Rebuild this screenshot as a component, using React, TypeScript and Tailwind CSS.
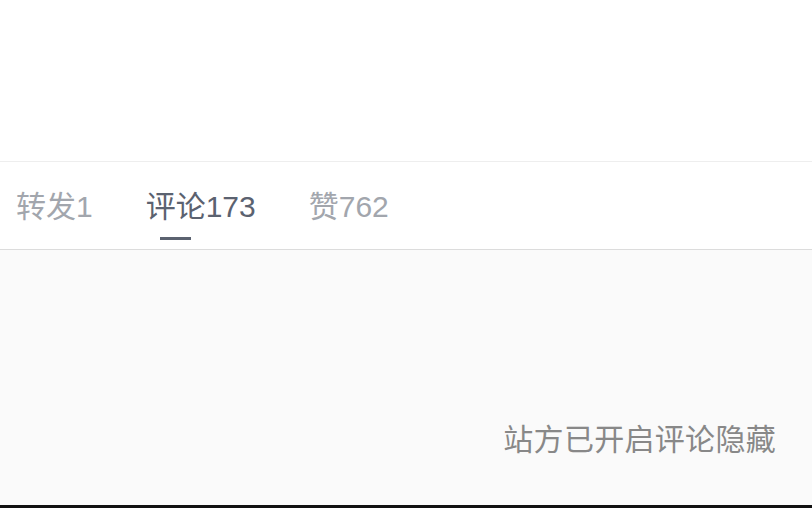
import React from "react";

const font = { fontFamily: '"Liberation Sans", "Noto Sans CJK SC", sans-serif' };

export default function App() {
  return (
    <div className="w-[812px] h-[508px] flex flex-col bg-white overflow-hidden" style={font}>
      <div className="h-[162px] shrink-0 bg-white border-b border-[#eeeeee]" />
      <div className="h-[88px] shrink-0 flex items-center pl-4 pt-[3px] gap-[53px] border-b border-[#dcdcdc] bg-white">
        <div className="text-[30px] leading-none text-[#a2a6ad]">转发1</div>
        <div className="relative text-[30px] leading-none text-[#5b6270]">
          评论173
          <div className="absolute left-[14px] top-[45px] w-[31px] h-[3px] bg-[#5b6270]" />
        </div>
        <div className="text-[30px] leading-none text-[#a2a6ad]">赞762</div>
      </div>
      <div className="flex-1 bg-[#fafafa] flex justify-end pr-[36px] pt-[175px]">
        <div className="text-[30px] leading-none text-[#888888] tracking-[0.3px]">站方已开启评论隐藏</div>
      </div>
      <div className="h-[3px] shrink-0 bg-[#111111]" />
    </div>
  );
}
